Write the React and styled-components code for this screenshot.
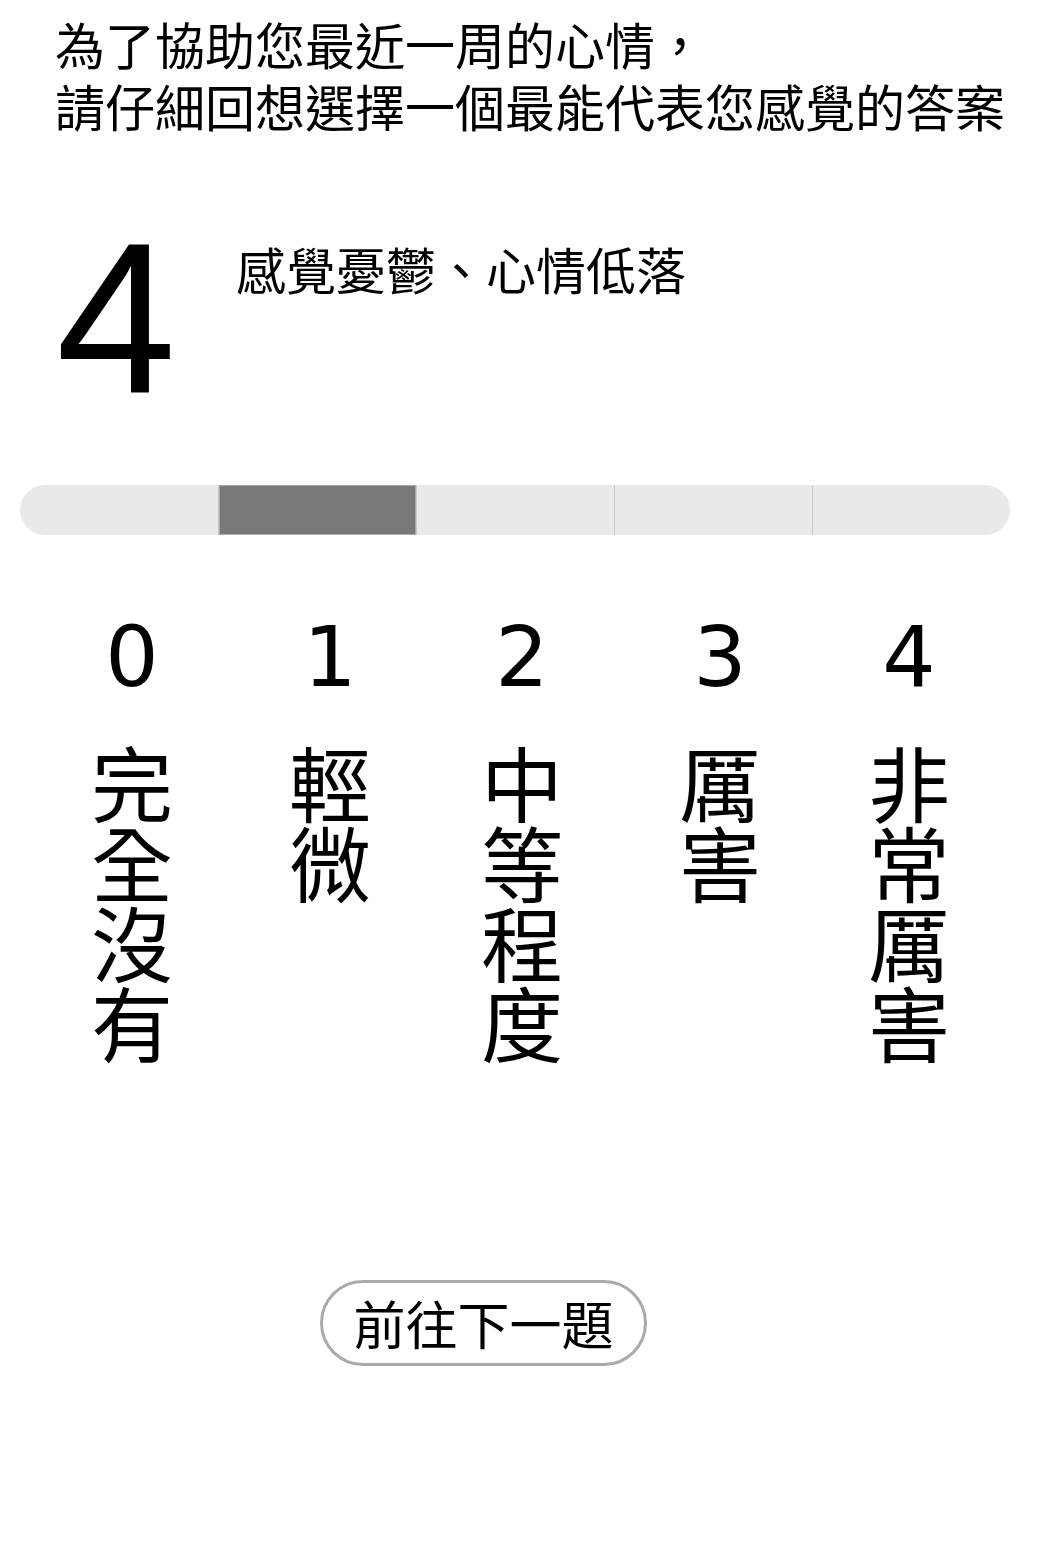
import React, { useState } from 'react';
import styled, { createGlobalStyle } from 'styled-components';

const options = [
  { value: 0, label: '完全沒有' },
  { value: 1, label: '輕微' },
  { value: 2, label: '中等程度' },
  { value: 3, label: '厲害' },
  { value: 4, label: '非常厲害' },
];

export default function App() {
  const [selected, setSelected] = useState(1);

  return (
    <>
      <GlobalStyle />
      <Page>
        <Intro>
          <IntroLine>為了協助您最近一周的心情，</IntroLine>
          <IntroLine>請仔細回想選擇一個最能代表您感覺的答案</IntroLine>
        </Intro>
        <QuestionRow>
          <QuestionNumber>4</QuestionNumber>
          <QuestionText>感覺憂鬱、心情低落</QuestionText>
        </QuestionRow>
        <Scale>
          {options.map((o) => (
            <Segment
              key={o.value}
              $active={o.value === selected}
              onClick={() => setSelected(o.value)}
            />
          ))}
        </Scale>
        <Options>
          {options.map((o) => (
            <Option key={o.value} onClick={() => setSelected(o.value)}>
              <OptionValue>{o.value}</OptionValue>
              <OptionLabel>{o.label}</OptionLabel>
            </Option>
          ))}
        </Options>
        <Footer>
          <NextButton type="button">前往下一題</NextButton>
        </Footer>
      </Page>
    </>
  );
}

const GlobalStyle = createGlobalStyle`
  body {
    margin: 0;
    background: #fff;
    color: #000;
    font-family: "Noto Sans CJK TC", "Noto Sans", sans-serif;
  }
`;

const Page = styled.div`
  width: 1040px;
  min-height: 1552px;
  padding: 13px 30px 0 20px;
  box-sizing: border-box;
`;

const Intro = styled.h1`
  display: flex;
  flex-direction: column;
  gap: 2px;
  margin: 0 0 0 35px;
  font-size: 50px;
  font-weight: 400;
`;

const IntroLine = styled.span`
  display: block;
  height: 60px;
  line-height: 60px;
  white-space: nowrap;
`;

const QuestionRow = styled.div`
  display: flex;
  align-items: flex-start;
  margin-top: 95px;
  padding-left: 36px;
  height: 255px;
`;

const QuestionNumber = styled.div`
  font-family: "Liberation Sans", Arial, sans-serif;
  font-size: 216px;
  line-height: 1;
  margin-top: -20px;
  width: 180px;
`;

const QuestionText = styled.div`
  font-size: 50px;
  line-height: 60px;
  margin-top: 8px;
`;

const Scale = styled.div`
  display: grid;
  grid-template-columns: repeat(5, 1fr);
  width: 990px;
  height: 50px;
  border-radius: 25px;
  overflow: hidden;
  background: #e9e9e9;
`;

const Segment = styled.div`
  background: ${(p) => (p.$active ? '#787878' : 'transparent')};
  border-left: 1px solid #c8c8c8;
  box-shadow: ${(p) => (p.$active ? 'inset 0 0 0 1px #aaa' : 'none')};
  cursor: pointer;

  &:first-child {
    border-left: none;
  }
`;

const Options = styled.div`
  display: grid;
  grid-template-columns: 196px 200px 184px 212px 166px;
  padding-left: 14px;
  margin-top: 72px;
`;

const Option = styled.div`
  display: flex;
  flex-direction: column;
  align-items: center;
  cursor: pointer;
`;

const OptionValue = styled.div`
  font-family: "DejaVu Sans", sans-serif;
  font-size: 84px;
  line-height: 100px;
`;

const OptionLabel = styled.div`
  margin-top: 34px;
  width: 82px;
  font-size: 82px;
  line-height: 80px;
  text-align: center;
  word-break: break-all;
`;

const Footer = styled.div`
  padding-left: 300px;
  margin-top: 219px;
`;

const NextButton = styled.button`
  width: 327px;
  height: 86px;
  border: 3px solid #aaa;
  border-radius: 43px;
  background: #fff;
  font-family: "Noto Sans CJK TC", sans-serif;
  font-size: 52px;
  line-height: 1;
  color: #000;
  padding: 0;
  cursor: pointer;
`;
